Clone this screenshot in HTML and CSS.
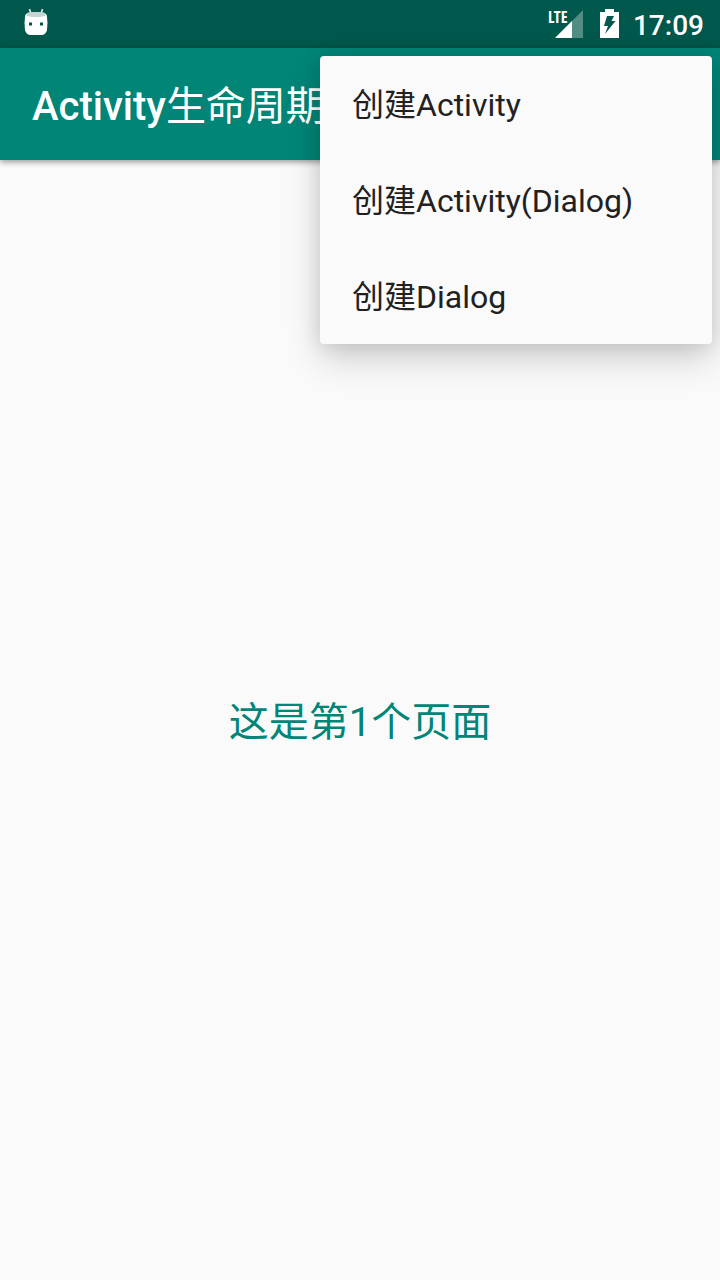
FILE: index.html
```html
<!DOCTYPE html>
<html lang="zh-CN">
<head>
  <meta charset="utf-8">
  <meta name="viewport" content="width=device-width, initial-scale=1">
  <title>Activity生命周期</title>
  <link rel="stylesheet" href="styles.css">
</head>
<body>
  <div class="status-bar">
    <svg class="icon-debug" width="24" height="28" viewBox="0 0 24 28" aria-hidden="true">
      <path d="M5.500 1l1.500 5M18.500 1l-1.500 5" stroke="#dfeae8" stroke-width="1.600" fill="none"/>
      <path d="M1 9Q1 5 5 5H19Q23 5 23 9Q24 15 23 22Q22 27 17 27H7Q2 27 1 22Q0 15 1 9Z" fill="#fff"/>
      <path d="M2 7Q3 4 7 4H17Q21 4 22 7Q20 9 12 9Q4 9 2 7Z" fill="#c3d6d3"/>
      <path d="M5 14.500h3v3H5zM16 14.500h3v3h-3z" fill="#00574b"/>
    </svg>
    <div class="status-right">
      <div class="signal">
        <svg width="30" height="30" viewBox="0 0 30 30" aria-hidden="true">
          <path d="M29 1V29H1Z" fill="#fff" fill-opacity=".32"/>
          <path d="M18 12V29H1Z" fill="#fff"/>
        </svg>
        <span class="network">LTE</span>
      </div>
      <svg class="icon-battery" width="20" height="30" viewBox="0 0 20 30" aria-hidden="true">
        <path d="M5 0H14V3H19V29H0V3H5Z" fill="#fff"/>
        <path d="M7 7H14L11.500 12H15.500L5 25L8 17H4Z" fill="#00574b"/>
      </svg>
      <time class="clock">17:09</time>
    </div>
  </div>
  <header class="app-bar">
    <h1 class="app-title">Activity<span class="title-cjk">生命周期</span></h1>
  </header>
  <main class="content">
    <p class="message">这是第1个页面</p>
  </main>
  <div class="menu" role="menu">
    <button class="menu-item" role="menuitem" type="button">创建Activity</button>
    <button class="menu-item" role="menuitem" type="button">创建Activity(Dialog)</button>
    <button class="menu-item" role="menuitem" type="button">创建Dialog</button>
  </div>
</body>
</html>
```
FILE: styles.css
```css
* {
  box-sizing: border-box;
}

body {
  margin: 0;
  min-height: 100vh;
  display: flex;
  flex-direction: column;
  position: relative;
  overflow-x: hidden;
  background: #fafafa;
  font-family: Roboto, "Noto Sans CJK SC", sans-serif;
}

.status-bar {
  display: flex;
  justify-content: space-between;
  align-items: center;
  height: 48px;
  padding: 0 16px 0 24px;
  background: #00574b;
  color: #fff;
}

.icon-debug {
  margin-bottom: 4px;
}

.status-right {
  display: flex;
  align-items: center;
}

.signal {
  position: relative;
  width: 36px;
  height: 30px;
  margin-right: 16px;
  text-align: right;
}

.signal svg {
  display: block;
  margin-left: auto;
}

.network {
  position: absolute;
  top: 0;
  left: 0;
  font: 700 16px/16px "Open Sans Condensed", "Roboto Condensed", Roboto, sans-serif;
}

.icon-battery {
  margin-right: 13px;
}

.clock {
  padding-top: 4px;
  font-size: 28px;
  font-weight: 500;
  line-height: 32px;
}

.app-bar {
  display: flex;
  align-items: center;
  height: 112px;
  padding: 6px 32px 0;
  background: #008577;
  box-shadow: 0 2px 6px rgba(0, 0, 0, 0.4);
}

.app-title {
  margin: 0;
  color: #fff;
  font-size: 40px;
  font-weight: 500;
  line-height: 48px;
  white-space: nowrap;
}

.title-cjk {
  font-weight: 400;
}

.content {
  flex: 1;
  display: flex;
  align-items: center;
  justify-content: center;
  padding-top: 6px;
}

.message {
  margin: 0;
  color: #008577;
  font-size: 40px;
  line-height: 48px;
}

.menu {
  position: absolute;
  top: 56px;
  right: 8px;
  width: 392px;
  background: #fafafa;
  border-radius: 4px;
  box-shadow: 0 16px 36px rgba(0, 0, 0, 0.16), 0 2px 20px rgba(0, 0, 0, 0.12);
}

.menu-item {
  display: block;
  width: 100%;
  height: 96px;
  padding: 0 32px 4px;
  border: 0;
  background: transparent;
  color: #212121;
  font: inherit;
  font-size: 32px;
  text-align: left;
}
```
